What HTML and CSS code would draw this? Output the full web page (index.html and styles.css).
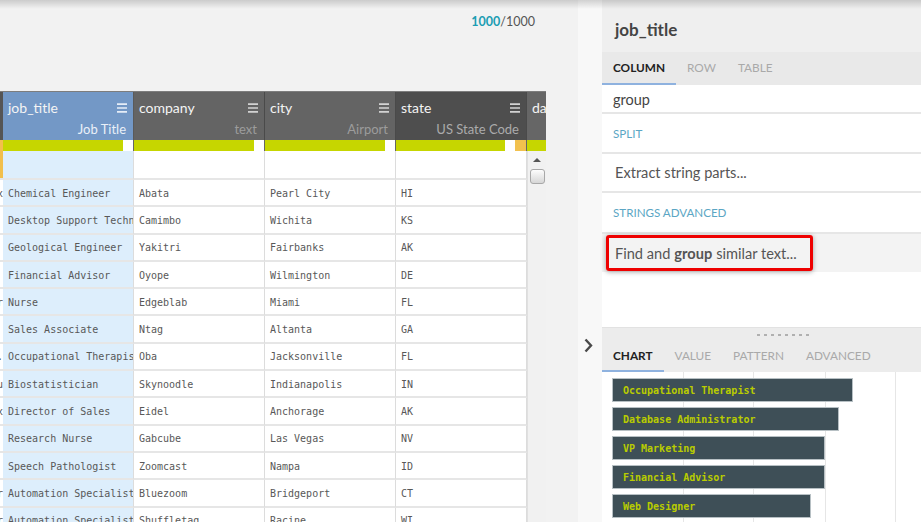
FILE: index.html
```html
<!DOCTYPE html>
<html>
<head>
<meta charset="utf-8">
<title>job_title</title>
<link rel="stylesheet" href="styles.css">
</head>
<body>
<div class="app">
  <div class="main">
    <div class="topbar"><span class="count"><b>1000</b>/1000</span></div>
    <div class="grid">
      <div class="thead">
        <div class="hc0"></div>
        <div class="hc blue">
          <div class="hname"><span>job_title</span><svg class="menu" viewBox="0 0 10 10"><path d="M0 1.2H10M0 5H10M0 8.8H10"/></svg></div>
          <div class="hsub">Job Title</div>
        </div>
        <div class="hc gray">
          <div class="hname"><span>company</span><svg class="menu" viewBox="0 0 10 10"><path d="M0 1.2H10M0 5H10M0 8.8H10"/></svg></div>
          <div class="hsub">text</div>
        </div>
        <div class="hc gray">
          <div class="hname"><span>city</span><svg class="menu" viewBox="0 0 10 10"><path d="M0 1.2H10M0 5H10M0 8.8H10"/></svg></div>
          <div class="hsub">Airport</div>
        </div>
        <div class="hc dark">
          <div class="hname"><span>state</span><svg class="menu" viewBox="0 0 10 10"><path d="M0 1.2H10M0 5H10M0 8.8H10"/></svg></div>
          <div class="hsub">US State Code</div>
        </div>
        <div class="hc da"><div class="hname"><span>date</span></div></div>
      </div>
      <div class="cbar">
        <div class="cb0"></div>
        <div class="cb"><span class="g"></span><span class="w"></span></div>
        <div class="cb"><span class="g"></span><span class="w"></span></div>
        <div class="cb"><span class="g"></span><span class="w"></span></div>
        <div class="cb"><span class="g"></span><span class="w"></span><span class="o"></span></div>
        <div class="cb da"><span class="g"></span></div>
      </div>
      <div class="tbody">
        <div class="rows">
          <div class="row first"><div class="c0 hot"></div><div class="c sel"></div><div class="c"></div><div class="c"></div><div class="c"></div></div>
          <div class="row"><div class="c0"><span>x</span></div><div class="c sel">Chemical Engineer</div><div class="c">Abata</div><div class="c">Pearl City</div><div class="c">HI</div></div>
          <div class="row"><div class="c0"></div><div class="c sel">Desktop Support Technician</div><div class="c">Camimbo</div><div class="c">Wichita</div><div class="c">KS</div></div>
          <div class="row"><div class="c0"></div><div class="c sel">Geological Engineer</div><div class="c">Yakitri</div><div class="c">Fairbanks</div><div class="c">AK</div></div>
          <div class="row"><div class="c0"></div><div class="c sel">Financial Advisor</div><div class="c">Oyope</div><div class="c">Wilmington</div><div class="c">DE</div></div>
          <div class="row"><div class="c0"><span>r</span></div><div class="c sel">Nurse</div><div class="c">Edgeblab</div><div class="c">Miami</div><div class="c">FL</div></div>
          <div class="row"><div class="c0"></div><div class="c sel">Sales Associate</div><div class="c">Ntag</div><div class="c">Altanta</div><div class="c">GA</div></div>
          <div class="row"><div class="c0"><span>.</span></div><div class="c sel">Occupational Therapist</div><div class="c">Oba</div><div class="c">Jacksonville</div><div class="c">FL</div></div>
          <div class="row"><div class="c0"><span>u</span></div><div class="c sel">Biostatistician</div><div class="c">Skynoodle</div><div class="c">Indianapolis</div><div class="c">IN</div></div>
          <div class="row"><div class="c0"><span>x</span></div><div class="c sel">Director of Sales</div><div class="c">Eidel</div><div class="c">Anchorage</div><div class="c">AK</div></div>
          <div class="row"><div class="c0"></div><div class="c sel">Research Nurse</div><div class="c">Gabcube</div><div class="c">Las Vegas</div><div class="c">NV</div></div>
          <div class="row"><div class="c0"></div><div class="c sel">Speech Pathologist</div><div class="c">Zoomcast</div><div class="c">Nampa</div><div class="c">ID</div></div>
          <div class="row"><div class="c0"><span>r</span></div><div class="c sel">Automation Specialist</div><div class="c">Bluezoom</div><div class="c">Bridgeport</div><div class="c">CT</div></div>
          <div class="row"><div class="c0"><span>r</span></div><div class="c sel">Automation Specialist</div><div class="c">Shuffletag</div><div class="c">Racine</div><div class="c">WI</div></div>
        </div>
        <div class="sb"><div class="up"></div><div class="thumb"></div></div>
      </div>
    </div>
  </div>
  <div class="gutter">
    <svg class="chev" viewBox="0 0 9 15"><path d="M1.5 1.5L7 7.5L1.5 13.5"/></svg>
  </div>
  <div class="panel">
    <div class="ph">job_title</div>
    <div class="tabs">
      <div class="tab on">Column</div>
      <div class="tab">Row</div>
      <div class="tab">Table</div>
    </div>
    <div class="mi grp">group</div>
    <div class="mi sec">Split</div>
    <div class="mi item">Extract string parts...</div>
    <div class="mi sec tall">Strings Advanced</div>
    <div class="mi find">Find and <b>group</b> similar text...<div class="hl"></div></div>
    <div class="spacer"></div>
    <div class="lh">
      <div class="handle"></div>
      <div class="tab on">Chart</div>
      <div class="tab">Value</div>
      <div class="tab">Pattern</div>
      <div class="tab">Advanced</div>
    </div>
    <div class="chart">
      <div class="bar" style="width:241px">Occupational Therapist</div>
      <div class="bar" style="width:227px">Database Administrator</div>
      <div class="bar" style="width:213px">VP Marketing</div>
      <div class="bar" style="width:213px">Financial Advisor</div>
      <div class="bar" style="width:199px">Web Designer</div>
    </div>
  </div>
</div>
</body>
</html>
```
FILE: styles.css
```css
* { box-sizing: border-box; }
html, body { margin: 0; padding: 0; }
body {
  width: 921px;
  height: 522px;
  overflow: hidden;
  background: #f2f2f2;
  font-family: Lato, "Open Sans", sans-serif;
  position: relative;
}
body::before {
  content: "";
  position: absolute;
  left: 0; right: 0; top: 0;
  height: 9px;
  background: linear-gradient(rgba(0,0,0,0.16), rgba(0,0,0,0));
  z-index: 5;
}
.app { display: flex; height: 522px; }

/* main */
.main { width: 578px; display: flex; flex-direction: column; }
.topbar {
  height: 91px;
  display: flex;
  justify-content: flex-end;
  padding: 14px 43px 0 0;
  font-size: 12.5px;
  line-height: 16px;
  color: #555;
}
.count b { color: #1b9db2; font-weight: 700; }

.grid { flex: 1; width: 546px; display: flex; flex-direction: column; overflow: hidden; }
.thead { display: flex; height: 49px; background: #555; border-top: 1px solid #7d7d7d; }
.hc0 { width: 3px; background: #555; }
.hc {
  width: 131px;
  border-right: 1px solid #4a4a4a;
  padding: 6px 6px 0 5px;
  color: #f4f4f4;
  overflow: hidden;
}
.hc.blue { background: #7398c6; border-right-color: #5a5a5a; }
.hc.gray { background: #646464; }
.hc.dark { background: #4e4e4e; }
.hc.da { width: 19px; background: #666; border-right: none; }
.hname {
  display: flex;
  justify-content: space-between;
  align-items: center;
  height: 19px;
  font-size: 14px;
  white-space: nowrap;
}
.menu { width: 10px; height: 10px; flex: none; margin-top: 1px; }
.menu path { stroke: #d2d2d2; stroke-width: 1.7; fill: none; }
.blue .menu path { stroke: #e6edf7; }
.hsub {
  text-align: right;
  font-size: 13px;
  line-height: 16px;
  margin-top: 4px;
  padding-right: 1px;
  color: #9c9c9c;
  white-space: nowrap;
}
.blue .hsub { color: #eaf0f8; }
.dark .hsub { color: #ababab; }

.cbar { display: flex; height: 11px; background: #555; }
.cb0 { width: 3px; background: #f2bf4c; }
.cb { width: 131px; display: flex; border-right: 1px solid #666; }
.cb .g { flex: 1; background: #c6d600; }
.cb .w { width: 10px; background: #fff; }
.cb .o { width: 11px; background: #f2c14e; }
.cb.da { width: 19px; border-right: none; }

.tbody { flex: 1; display: flex; overflow: hidden; }
.rows { width: 527px; }
.row { display: flex; height: 27.3px; }
.row.first { height: 29px; }
.c0 {
  width: 3px;
  background: #fff;
  border-bottom: 2px solid #e6e6e6;
  overflow: hidden;
  font: 10px "DejaVu Sans Mono", monospace;
  color: #555;
  display: flex;
  align-items: center;
  padding-top: 1px;
}
.c0 span { margin-left: -3px; }
.c0.hot { background: #f2bf4c; }
.c {
  width: 131px;
  background: #fff;
  border-right: 1px solid #dcdcdc;
  border-bottom: 2px solid #e6e6e6;
  padding: 1px 0 0 5px;
  font: 10px "DejaVu Sans Mono", monospace;
  color: #585858;
  white-space: nowrap;
  overflow: hidden;
  display: flex;
  align-items: center;
}
.c.sel { background: #ddeefc; }

.sb {
  width: 19px;
  background: #f1f1f1;
  border-left: 1px solid #e0e0e0;
  display: flex;
  flex-direction: column;
  align-items: center;
}
.sb .up {
  width: 0; height: 0;
  border-left: 4px solid transparent;
  border-right: 4px solid transparent;
  border-bottom: 4px solid #555;
  margin-top: 7px;
}
.sb .thumb {
  width: 15px;
  height: 15px;
  margin-top: 7px;
  border: 1px solid #a8a8a8;
  border-radius: 3px;
  background: linear-gradient(#fdfdfd, #d6d6d6);
}

/* gutter */
.gutter { width: 24px; background: #f8f8f8; padding: 338px 0 0 6px; }
.chev { width: 9px; height: 15px; display: block; }
.chev path { stroke: #4a4a4a; stroke-width: 2.4; fill: none; }

/* panel */
.panel { width: 319px; display: flex; flex-direction: column; background: #fff; }
.ph {
  height: 52px;
  flex: none;
  background: #efefef;
  padding: 20px 0 0 13px;
  font-size: 17px;
  line-height: 20px;
  font-weight: 700;
  color: #444;
}
.tabs { height: 33px; flex: none; background: #e9e9e9; display: flex; }
.tab {
  padding: 0 11px;
  font-size: 11.8px;
  color: #a9a9a9;
  text-transform: uppercase;
  display: flex;
  align-items: center;
  border-bottom: 2px solid transparent;
}
.tabs .tab { padding-bottom: 1px; }
.tab.on { color: #222; font-weight: 700; border-bottom-color: #8fb2df; }

.mi {
  display: flex;
  align-items: center;
  flex: none;
  padding-left: 11px;
  border-bottom: 2px solid #e6e6e6;
  white-space: nowrap;
}
.mi.grp { height: 29px; font-size: 14.5px; color: #444; padding-top: 1px; }
.mi.sec { height: 40px; font-size: 11.6px; color: #5ba6c4; text-transform: uppercase; }
.mi.sec.tall { height: 41px; }
.mi.item { height: 39px; font-size: 14.6px; color: #555; padding-left: 13px; }
.mi.find {
  height: 38px;
  background: #f3f3f3;
  border-bottom: none;
  font-size: 14.6px;
  color: #555;
  padding-left: 13px;
  position: relative;
}
.mi.find b { font-weight: 700; margin: 0 4px; }
.hl {
  position: absolute;
  left: 4px;
  top: 1px;
  width: 207px;
  height: 36px;
  border: 3.5px solid #ee0000;
  border-radius: 3px;
  box-shadow: 0 1px 5px rgba(0,0,0,0.35);
}
.spacer { height: 55px; flex: none; }
.lh {
  height: 45px;
  flex: none;
  background: #ececec;
  border-top: 1px solid #e2e2e2;
  display: flex;
  align-items: stretch;
  padding-top: 12px;
  position: relative;
}
.handle {
  position: absolute;
  left: 155px;
  top: 6px;
  width: 52px;
  height: 2px;
  background: repeating-linear-gradient(90deg, #b0b0b0 0 3px, transparent 3px 7px);
}
.chart {
  flex: 1;
  overflow: hidden;
  padding: 6px 0 0 10px;
  display: flex;
  flex-direction: column;
  gap: 5px;
  background:
    linear-gradient(#e6e6e6, #e6e6e6) 81px 0 / 1px 100% no-repeat,
    linear-gradient(#e6e6e6, #e6e6e6) 151px 0 / 1px 100% no-repeat,
    linear-gradient(#e6e6e6, #e6e6e6) 223px 0 / 1px 100% no-repeat,
    linear-gradient(#e6e6e6, #e6e6e6) 293px 0 / 1px 100% no-repeat,
    #fff;
}
.bar {
  height: 24px;
  flex: none;
  background: #3e4f57;
  border: 1px solid #b7c0c4;
  color: #b9cc00;
  font: bold 10px "DejaVu Sans Mono", monospace;
  padding-left: 10px;
  display: flex;
  align-items: center;
  white-space: nowrap;
}
```
